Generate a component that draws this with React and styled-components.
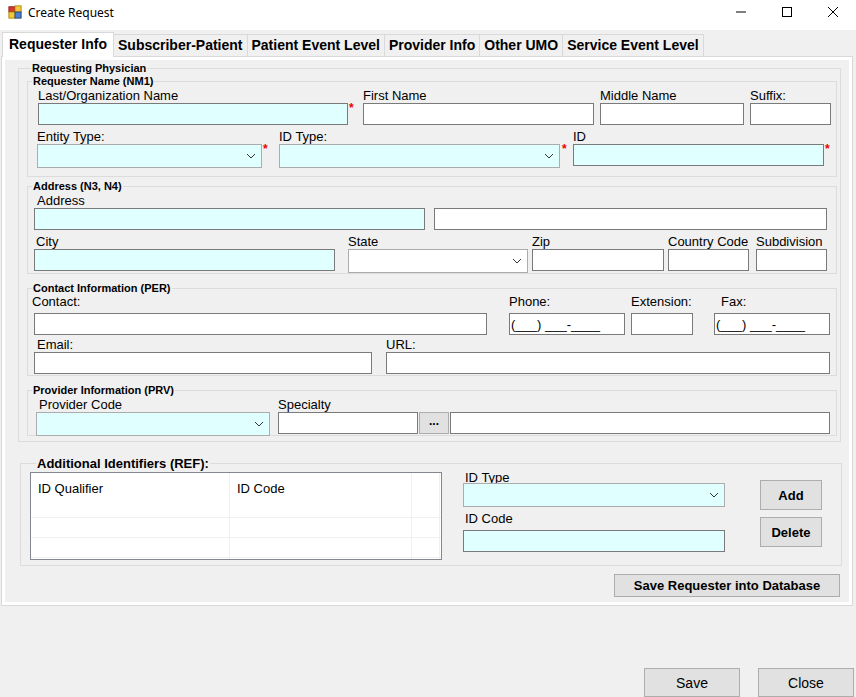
import styled, { createGlobalStyle } from 'styled-components';

const Global = createGlobalStyle`
  body { margin: 0; background: #f0f0f0; font-family: "Liberation Sans", Arial, sans-serif; }
`;

export default function App() {
  return (
    <Window>
      <Global />
      <TitleBar>
        <AppIcon viewBox="0 0 16 16">
          <rect x="1" y="2" width="7" height="6" fill="#d33" stroke="#822" />
          <rect x="8" y="1" width="7" height="7" fill="#f4c542" stroke="#a80" />
          <rect x="1" y="8" width="7" height="7" fill="#f4c542" stroke="#a80" />
          <rect x="8" y="8" width="7" height="7" fill="#4a7fd4" stroke="#246" />
        </AppIcon>
        <Title>Create Request</Title>
        <WinButtons>
          <WinBtn>
            <svg width="12" height="12"><path d="M1 6h10" stroke="#000" /></svg>
          </WinBtn>
          <WinBtn>
            <svg width="12" height="12"><rect x="1.5" y="1.5" width="9" height="9" fill="none" stroke="#000" /></svg>
          </WinBtn>
          <WinBtn>
            <svg width="12" height="12"><path d="M1 1l10 10M11 1L1 11" stroke="#000" /></svg>
          </WinBtn>
        </WinButtons>
      </TitleBar>

      <Tabs>
        <Tab $active>Requester Info</Tab>
        <Tab>Subscriber-Patient</Tab>
        <Tab>Patient Event Level</Tab>
        <Tab>Provider Info</Tab>
        <Tab>Other UMO</Tab>
        <Tab>Service Event Level</Tab>
      </Tabs>

      <Panel>
        <OuterGroup>
          <Legend>Requesting Physician</Legend>

          <Group $h={102} $mt={1}>
            <Legend>Requester Name (NM1)</Legend>
            <Row $mt={1}>
              <Field $ml={10} $w={310} label="Last/Organization Name" cyan />
              <Star $ml={1} />
              <Field $ml={6} $w={231} label="First Name" />
              <Field $ml={6} $w={144} label="Middle Name" />
              <Field $ml={6} $w={81} label="Suffix:" />
            </Row>
            <Row $mt={4}>
              <Field $ml={9} $w={225} label="Entity Type:" combo cyan />
              <Star $ml={1} />
              <Field $ml={8} $w={281} label="ID Type:" combo cyan />
              <Star $ml={2} />
              <Field $ml={3} $w={251} label="ID" cyan />
              <Star $ml={1} />
            </Row>
          </Group>

          <Group $h={94} $mt={3}>
            <Legend>Address (N3, N4)</Legend>
            <Row $mt={1}>
              <Field $ml={6} $w={391} label="Address" cyan $lx={3} />
              <Field $ml={9} $w={393} label="" />
            </Row>
            <Row $mt={4}>
              <Field $ml={6} $w={301} label="City" cyan $lx={2} />
              <Field $ml={13} $w={180} label="State" combo />
              <Field $ml={4} $w={132} label="Zip" />
              <Field $ml={4} $w={81} label="Country Code" />
              <Field $ml={7} $w={71} label="Subdivision" />
            </Row>
          </Group>

          <Group $h={94} $mt={8}>
            <Legend>Contact Information (PER)</Legend>
            <Row $mt={0}>
              <Field $ml={6} $w={453} label="Contact:" $lx={-2} $gap={4} />
              <Field $ml={22} $w={116} label="Phone:" value="(___) ___-____" $gap={4} />
              <Field $ml={6} $w={62} label="Extension:" $gap={4} />
              <Field $ml={21} $w={116} label="Fax:" value="(___) ___-____" $gap={4} $lx={7} />
            </Row>
            <Row $mt={2}>
              <Field $ml={6} $w={338} label="Email:" $gap={0} $lx={3} />
              <Field $ml={14} $w={444} label="URL:" $gap={0} />
            </Row>
          </Group>

          <Group $h={52} $mt={8}>
            <Legend>Provider Information (PRV)</Legend>
            <Row $mt={1}>
              <Field $ml={8} $w={234} label="Provider Code" combo cyan $lx={3} />
              <Field $ml={8} $w={140} label="Specialty" />
              <DotsButton>...</DotsButton>
              <Field $ml={1} $w={380} label="" />
            </Row>
          </Group>
        </OuterGroup>

        <RefGroup>
          <BigLegend>Additional Identifiers (REF):</BigLegend>
          <RefBody>
            <Grid>
              <GridRow $h={44}>
                <Cell $w={199}>ID Qualifier</Cell>
                <Cell $w={182}>ID Code</Cell>
                <Cell $w={28} />
              </GridRow>
              <GridRow $h={19}><Cell $w={199} /><Cell $w={182} /><Cell $w={28} /></GridRow>
              <GridRow $h={19}><Cell $w={199} /><Cell $w={182} /><Cell $w={28} /></GridRow>
              <GridRow $h={4}><Cell $w={199} /><Cell $w={182} /><Cell $w={28} /></GridRow>
            </Grid>
            <RefFields>
              <Field $w={262} label="ID Type" combo cyan $lx={2} $gap={-2} />
              <Field $w={262} label="ID Code" cyan $lx={2} $gap={4} />
            </RefFields>
            <RefButtons>
              <Btn $w={62} $h={30} $bold>Add</Btn>
              <Btn $w={62} $h={30} $bold>Delete</Btn>
            </RefButtons>
          </RefBody>
        </RefGroup>

        <SaveRow>
          <Btn $w={226} $h={23} $bold>Save Requester into Database</Btn>
        </SaveRow>
      </Panel>

      <Footer>
        <Btn $w={96} $h={29} $size={14}>Save</Btn>
        <Btn $w={96} $h={29} $size={14}>Close</Btn>
      </Footer>
    </Window>
  );
}

function Field({ label, combo, cyan, value, ...rest }) {
  return (
    <FieldWrap {...rest}>
      <Label $lx={rest.$lx || 0}>{label}</Label>
      <Control $cyan={cyan} $combo={combo} $gap={rest.$gap}>
        {value && <Mask>{value}</Mask>}
        {combo && (
          <Chevron viewBox="0 0 10 6">
            <path d="M1 1l4 4 4-4" fill="none" stroke="#333" strokeWidth="1" />
          </Chevron>
        )}
      </Control>
    </FieldWrap>
  );
}

function Star({ $ml }) {
  return <StarMark $ml={$ml}>*</StarMark>;
}

// styled-components
const Window = styled.div`
  width: 856px;
  height: 697px;
  background: #f0f0f0;
  position: relative;
  overflow: hidden;
`;

const TitleBar = styled.div`
  height: 30px;
  background: #fff;
  display: flex;
  align-items: center;
  padding-left: 8px;
`;

const AppIcon = styled.svg`
  width: 14px;
  height: 14px;
  margin-top: -6px;
`;

const Title = styled.div`
  font-family: "Noto Sans", "Liberation Sans", sans-serif;
  font-size: 12px;
  margin-left: 6px;
  margin-top: -6px;
`;

const WinButtons = styled.div`
  margin-left: auto;
  display: flex;
  align-self: stretch;
`;

const WinBtn = styled.div`
  width: 46px;
  display: flex;
  align-items: center;
  justify-content: center;
  margin-top: -6px;
`;

const Tabs = styled.div`
  display: flex;
  align-items: flex-end;
  height: 26px;
  padding-left: 2px;
  margin-top: 1px;
`;

const Tab = styled.div`
  font-weight: bold;
  color: #000;
  padding: 0 ${p => (p.$active ? '6px' : '4px')};
  height: ${p => (p.$active ? '24px' : '21px')};
  line-height: ${p => (p.$active ? '22px' : '21px')};
  background: ${p => (p.$active ? '#fff' : '#f0f0f0')};
  border: 1px solid #d9d9d9;
  border-bottom: ${p => (p.$active ? 'none' : '1px solid #d9d9d9')};
  margin-right: -1px;
  font-size: 14px;
  position: relative;
  z-index: ${p => (p.$active ? 2 : 1)};
`;

const Panel = styled.div`
  width: 852px;
  height: 550px;
  margin-left: 1px;
  margin-top: -1px;
  border: 1px solid #d9d9d9;
  background: #f0f0f0;
  box-shadow: inset 0 0 0 3px #fff;
  padding: 5px 14px 0 16px;
  box-sizing: border-box;
`;

const OuterGroup = styled.fieldset`
  margin: 0;
  padding: 0 3px 3px 8px;
  width: 822px;
  height: 380px;
  box-sizing: border-box;
  border: 1px solid #dcdcdc;
  display: flex;
  flex-direction: column;
`;

const Legend = styled.legend`
  font-size: 11px;
  font-weight: bold;
  padding: 0 1px;
  margin-left: 4px;
  line-height: 12px;
`;

const Group = styled.fieldset`
  margin: ${p => p.$mt || 0}px 0 0 0;
  padding: 0;
  height: ${p => p.$h}px;
  width: 810px;
  box-sizing: border-box;
  border: 1px solid #dcdcdc;
`;

const Row = styled.div`
  display: flex;
  align-items: flex-start;
  margin-top: ${p => p.$mt || 0}px;
`;

const FieldWrap = styled.div`
  width: ${p => p.$w}px;
  margin-left: ${p => p.$ml || 0}px;
  display: flex;
  flex-direction: column;
  flex-shrink: 0;
`;

const Label = styled.div`
  font-size: 13px;
  height: 15px;
  line-height: 15px;
  white-space: nowrap;
  margin-left: ${p => p.$lx}px;
`;

const Control = styled.div`
  height: ${p => (p.$combo ? 24 : 22)}px;
  margin-top: ${p => p.$gap || 0}px;
  box-sizing: border-box;
  border: 1px solid ${p => (p.$combo ? '#acacac' : '#7a7a7a')};
  background: ${p => (p.$cyan ? '#e0ffff' : '#fff')};
  display: flex;
  align-items: center;
  position: relative;
`;

const Chevron = styled.svg`
  width: 10px;
  height: 6px;
  margin-left: auto;
  margin-right: 5px;
`;

const Mask = styled.span`
  font-size: 13px;
  padding-left: 1px;
`;

const StarMark = styled.div`
  width: 8px;
  margin-left: ${p => p.$ml}px;
  color: #e00;
  font-size: 12px;
  font-weight: bold;
  padding-top: 15px;
  line-height: 10px;
  flex-shrink: 0;
`;

const DotsButton = styled.div`
  width: 30px;
  height: 22px;
  margin-top: 15px;
  margin-left: 1px;
  box-sizing: border-box;
  border: 1px solid #adadad;
  background: #e1e1e1;
  font-size: 12px;
  font-weight: bold;
  text-align: center;
  line-height: 16px;
  flex-shrink: 0;
`;

const RefGroup = styled.fieldset`
  margin: 14px 0 0 2px;
  padding: 0 0 0 9px;
  width: 822px;
  height: 110px;
  box-sizing: border-box;
  border: 1px solid #dcdcdc;
`;

const BigLegend = styled.legend`
  font-size: 13px;
  font-weight: bold;
  padding: 0 1px;
  margin-left: 6px;
`;

const RefBody = styled.div`
  display: flex;
  align-items: flex-start;
  margin-top: 1px;
`;

const Grid = styled.div`
  width: 412px;
  height: 88px;
  box-sizing: border-box;
  border: 1px solid #828790;
  background: #fff;
  overflow: hidden;
`;

const GridRow = styled.div`
  display: flex;
  height: ${p => p.$h}px;
  border-bottom: 1px solid #f0f0f0;
`;

const Cell = styled.div`
  width: ${p => p.$w}px;
  border-right: 1px solid #f0f0f0;
  font-size: 13px;
  padding: 8px 0 0 7px;
  box-sizing: border-box;
`;

const RefFields = styled.div`
  display: flex;
  flex-direction: column;
  gap: 4px;
  margin-left: 21px;
  margin-top: -2px;
`;

const RefButtons = styled.div`
  display: flex;
  flex-direction: column;
  gap: 7px;
  margin-left: 35px;
  margin-top: 8px;
`;

const Btn = styled.div`
  width: ${p => p.$w}px;
  height: ${p => p.$h}px;
  box-sizing: border-box;
  border: 1px solid #adadad;
  background: #e1e1e1;
  font-size: ${p => p.$size || 13}px;
  font-weight: ${p => (p.$bold ? 'bold' : 'normal')};
  display: flex;
  align-items: center;
  justify-content: center;
`;

const SaveRow = styled.div`
  display: flex;
  justify-content: flex-end;
  margin-top: 8px;
  margin-right: -2px;
`;

const Footer = styled.div`
  display: flex;
  gap: 18px;
  justify-content: flex-end;
  margin-top: 62px;
  margin-right: 2px;
`;
